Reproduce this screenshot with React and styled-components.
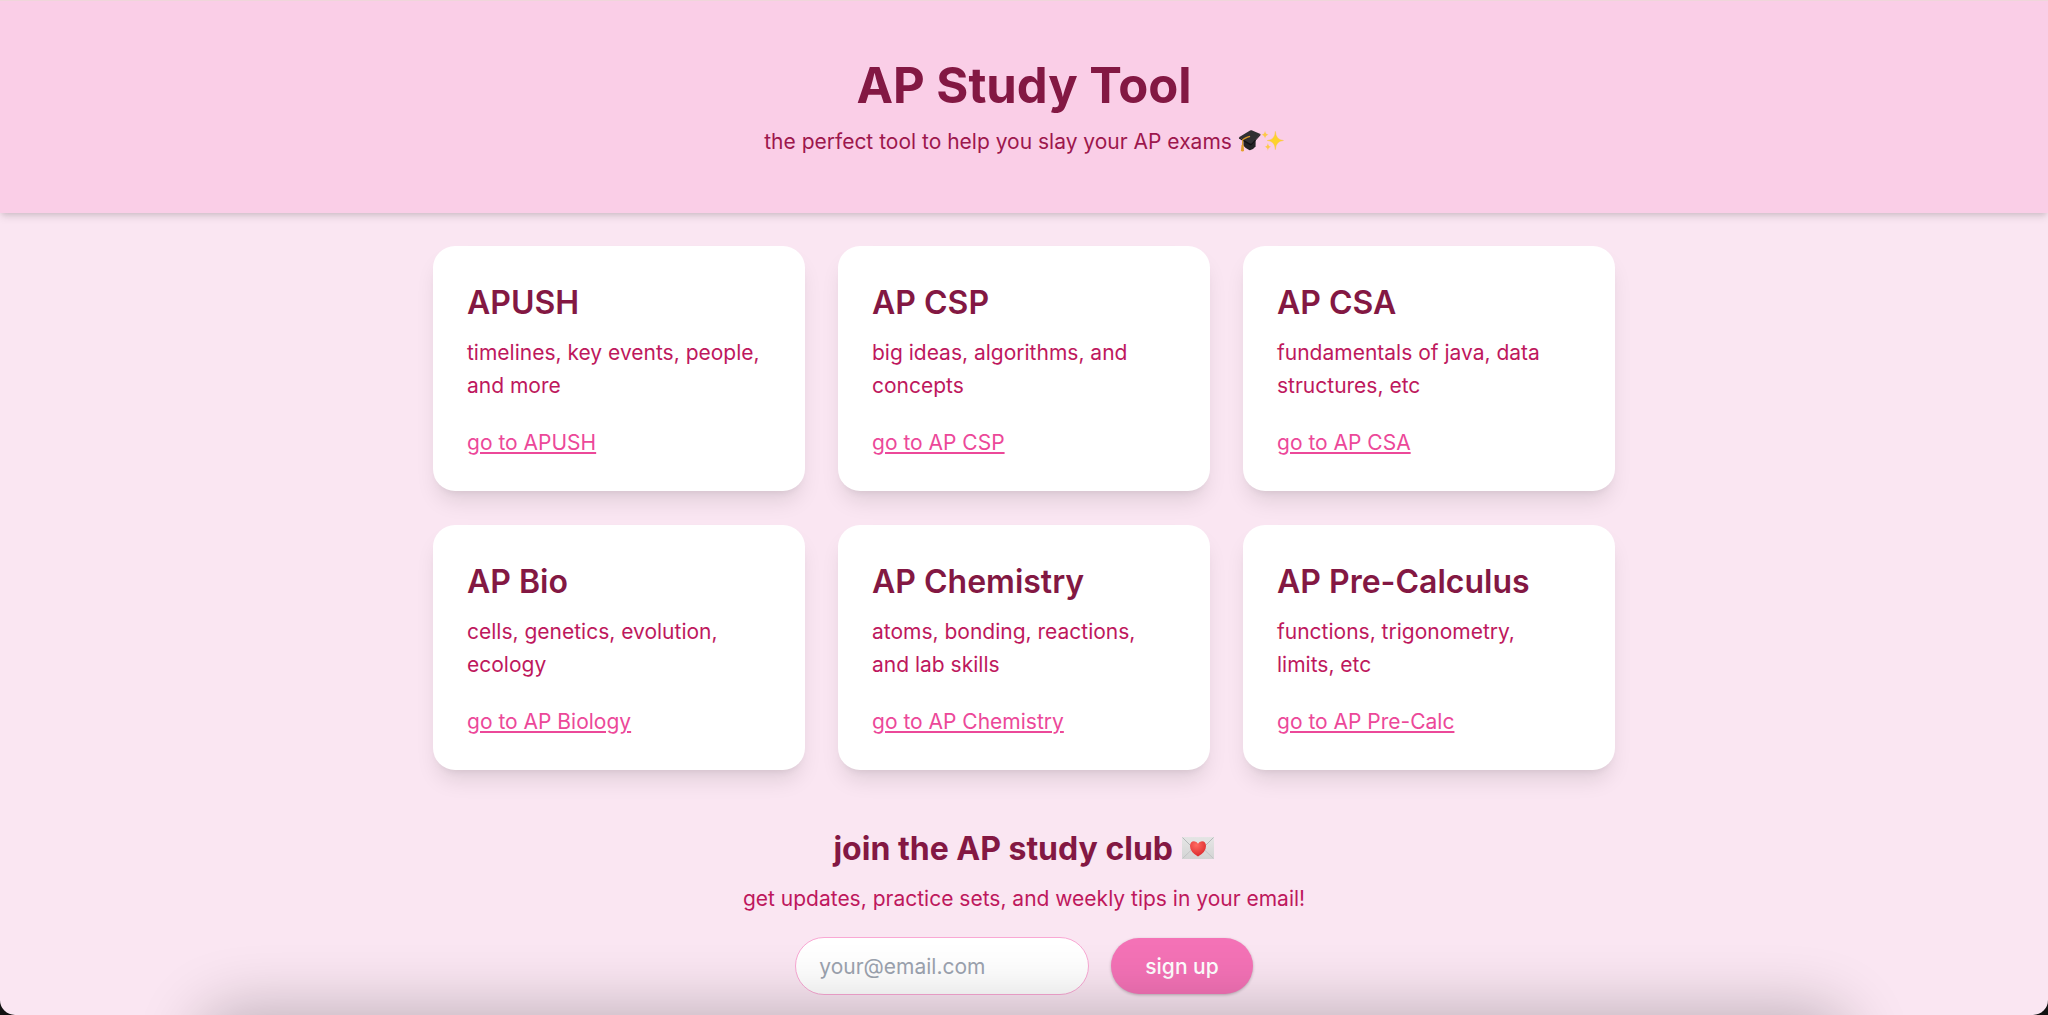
import styled, { createGlobalStyle } from 'styled-components';

const subjects = [
    { title: 'APUSH', text: 'timelines, key events, people, and more', link: 'go to APUSH', href: '#apush' },
    { title: 'AP CSP', text: 'big ideas, algorithms, and concepts', link: 'go to AP CSP', href: '#csp' },
    { title: 'AP CSA', text: 'fundamentals of java, data structures, etc', link: 'go to AP CSA', href: '#csa' },
    { title: 'AP Bio', text: 'cells, genetics, evolution, ecology', link: 'go to AP Biology', href: '#biology' },
    { title: 'AP Chemistry', text: 'atoms, bonding, reactions, and lab skills', link: 'go to AP Chemistry', href: '#chemistry' },
    { title: 'AP Pre-Calculus', text: 'functions, trigonometry, limits, etc', link: 'go to AP Pre-Calc', href: '#precalc' },
];

function CapIcon() {
    return (
        <Emoji viewBox="0 0 24 24" $size={23} role="img" aria-label="graduation cap">
            <path d="M5.5 10.5 L18.5 11 L18.3 18.2 Q15 22.6 11.6 22 Q8 20.5 5.7 17.6 Z" fill="#232325" />
            <path d="M1 8.6 L12.6 1.5 Q13.4 1.1 14.2 1.4 L23.4 5.3 L14.3 15 Q13.4 15.8 12.4 15.2 Z" fill="#303033" />
            <path d="M1 8.6 L12.4 15.2 Q13.4 15.8 14.3 15 L23.4 5.3 L23.4 6.5 L14.4 16.4 Q13.4 17.3 12.2 16.6 L1 9.8 Z" fill="#111113" />
            <path d="M12.6 7.6 Q6.6 9.3 4.9 11.4 L4.7 18" fill="none" stroke="#d99a2b" strokeWidth="1.3" />
            <path d="M3.7 16.6 L5.8 16.6 L6.3 23 Q4.7 24 3 23 Z" fill="#e3a02c" />
        </Emoji>
    );
}

function SparklesIcon() {
    return (
        <Emoji viewBox="0 0 24 24" $size={23} role="img" aria-label="sparkles">
            <path d="M15 2.5 Q15.5 11.5 23.4 12 Q15.5 12.5 15 21.5 Q14.5 12.5 6.6 12 Q14.5 11.5 15 2.5 Z" fill="#fdd32c" stroke="#fbc53a" strokeWidth="0.5" />
            <path d="M4.2 1.8 Q4.6 5.4 7.8 5.9 Q4.6 6.4 4.2 10 Q3.8 6.4 0.7 5.9 Q3.8 5.4 4.2 1.8 Z" fill="#fdc94a" />
            <path d="M7.2 14.6 Q7.6 18.1 10.5 18.6 Q7.6 19.1 7.2 22.6 Q6.8 19.1 3.9 18.6 Q6.8 18.1 7.2 14.6 Z" fill="#fdc94a" />
        </Emoji>
    );
}

function LetterIcon() {
    return (
        <Emoji viewBox="0 0 34 34" $size={34} role="img" aria-label="love letter">
            <defs>
                <linearGradient id="paper" x1="0" y1="0" x2="0" y2="1">
                    <stop offset="0" stopColor="#e6e6e6" />
                    <stop offset="1" stopColor="#d3d4d4" />
                </linearGradient>
                <radialGradient id="heart" cx="0.4" cy="0.25" r="0.8">
                    <stop offset="0" stopColor="#ff6a60" />
                    <stop offset="1" stopColor="#d9252a" />
                </radialGradient>
            </defs>
            <rect x="1" y="5" width="32" height="22" rx="1" fill="url(#paper)" />
            <path d="M1.5 26.5 L13 15.5 M32.5 26.5 L21 15.5" stroke="#bfc1c2" strokeWidth="0.9" />
            <path d="M1.5 5.5 L15 19 Q17 20.5 19 19 L32.5 5.5" fill="#e3e3e3" stroke="#b5b8ba" strokeWidth="1" />
            <path d="M17 24.5 Q9 20 9 14 Q9.2 9.4 13 9.2 Q15.9 9.3 17 11.8 Q18.1 9.3 21 9.2 Q24.8 9.4 25 14 Q25 20 17 24.5 Z" fill="url(#heart)" />
        </Emoji>
    );
}

export default function App() {
    return (
        <>
            <GlobalStyle />
            <Header>
                <Title>AP Study Tool</Title>
                <Subtitle>
                    the perfect tool to help you slay your AP exams <CapIcon /><SparklesIcon />
                </Subtitle>
            </Header>
            <Subjects>
                {subjects.map((subject) => (
                    <Card key={subject.title}>
                        <Heading>{subject.title}</Heading>
                        <Text>{subject.text}</Text>
                        <CardLink href={subject.href}>{subject.link}</CardLink>
                    </Card>
                ))}
            </Subjects>
            <Club>
                <Heading>join the AP study club <LetterIcon /></Heading>
                <Text>get updates, practice sets, and weekly tips in your email!</Text>
                <Form onSubmit={(event) => event.preventDefault()}>
                    <EmailInput type="email" placeholder="your@email.com" aria-label="email" />
                    <SignUpButton type="submit">sign up</SignUpButton>
                </Form>
            </Club>
            <DockShadow />
            <WindowFrame />
        </>
    );
}

const GlobalStyle = createGlobalStyle`
    * {
        box-sizing: border-box;
    }

    body {
        margin: 0;
        background-color: #FAE6F2;
        font-family: Inter, "Liberation Sans", sans-serif;
        font-size: 21px;
        line-height: 33px;
    }

    h1, h2, p {
        margin: 0;
    }
`;

const Header = styled.header`
    padding: 58px 32px 55px;
    text-align: center;
    background-color: #FACEE7;
    box-shadow: 0 5px 8px -1px rgba(0, 0, 0, 0.1), 0 3px 5px -2px rgba(0, 0, 0, 0.1);
`;

const Title = styled.h1`
    margin-bottom: 11px;
    font-size: 49px;
    line-height: 56px;
    font-weight: 700;
    color: #831843;
`;

const Subtitle = styled.p`
    color: #9D174D;
`;

const Emoji = styled.svg`
    width: ${({ $size }) => $size}px;
    height: ${({ $size }) => $size}px;
    vertical-align: middle;
    margin-top: -5px;
`;

const Subjects = styled.main`
    max-width: 1248px;
    margin: 0 auto;
    padding: 33px;
    display: grid;
    grid-template-columns: repeat(3, 1fr);
    gap: 34px 33px;
`;

const Card = styled.section`
    padding: 34px 40px 32px 34px;
    border-radius: 22px;
    background-color: #FFFFFF;
    box-shadow: 0 14px 21px -4px rgba(0, 0, 0, 0.1), 0 6px 8px -6px rgba(0, 0, 0, 0.1);
`;

const Heading = styled.h2`
    margin-bottom: 11px;
    font-size: 32px;
    line-height: 45px;
    font-weight: 600;
    color: #831843;
`;

const Text = styled.p`
    color: #BE185D;
`;

const CardLink = styled.a`
    display: inline-block;
    margin-top: 24px;
    color: #EC4899;
    text-decoration: underline;
`;

const Club = styled.section`
    padding: 23px 33px 20px;
    text-align: center;

    ${Heading} {
        font-weight: 700;
    }
`;

const Form = styled.form`
    margin-top: 22px;
    display: flex;
    justify-content: center;
    align-items: center;
    gap: 22px;
`;

const EmailInput = styled.input`
    width: 294px;
    height: 58px;
    padding: 0 23px;
    border: 1px solid #F9A8D4;
    border-radius: 29px;
    background-color: #FFFFFF;
    font: inherit;
    color: #831843;

    &::placeholder {
        color: #9CA3AF;
        opacity: 1;
    }
`;

const SignUpButton = styled.button`
    height: 56px;
    padding: 0 34px;
    border: none;
    border-radius: 28px;
    background-color: #F472B6;
    box-shadow: 0 1px 3px rgba(0, 0, 0, 0.25);
    font: inherit;
    font-weight: 500;
    color: #FFFFFF;
    cursor: pointer;

    &:hover {
        background-color: #EC4899;
    }
`;

const DockShadow = styled.div`
    position: fixed;
    top: 100%;
    left: 10%;
    right: 10%;
    height: 100px;
    border-radius: 30px;
    box-shadow: 0 0 64px 6px rgba(0, 0, 0, 0.24);
    pointer-events: none;
`;

const WindowFrame = styled.div`
    position: fixed;
    inset: 0;
    border-top: 1px solid #EFD6DA;
    border-radius: 0 0 15px 15px;
    box-shadow: 0 0 0 15px #111111;
    pointer-events: none;
`;
